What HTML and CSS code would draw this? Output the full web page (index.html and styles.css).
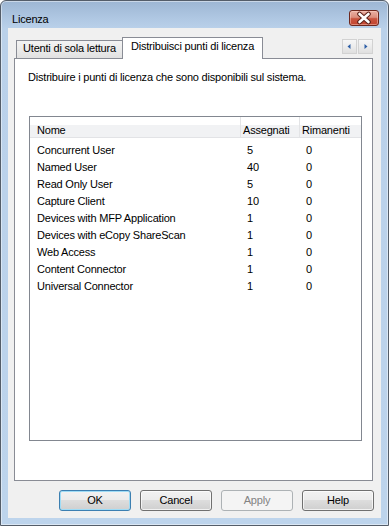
FILE: index.html
```html
<!DOCTYPE html>
<html lang="it">
<head>
<meta charset="utf-8">
<title>Licenza</title>
<link rel="stylesheet" href="styles.css">
</head>
<body>
<div class="window">
  <div class="titlebar">
    <span class="title">Licenza</span>
    <div class="close">
      <svg width="28" height="14" viewBox="0 0 28 14">
        <path d="M9.5 3 L18.5 11 M18.5 3 L9.5 11" stroke="#5b1f17" stroke-width="4.6" stroke-linecap="round"/>
        <path d="M9.5 3 L18.5 11 M18.5 3 L9.5 11" stroke="#ffffff" stroke-width="2.6" stroke-linecap="round"/>
      </svg>
    </div>
  </div>
  <div class="client">
    <div class="tabstrip">
      <div class="tab">Utenti di sola lettura</div>
      <div class="tab active">Distribuisci punti di licenza</div>
      <div class="scroller">
        <span class="sbtn"><svg width="13" height="13" viewBox="0 0 13 13"><polygon points="7.5,4 4.5,6.5 7.5,9" fill="#2d5ea6"/></svg></span>
        <span class="sbtn"><svg width="13" height="13" viewBox="0 0 13 13"><polygon points="5.5,4 8.5,6.5 5.5,9" fill="#2d5ea6"/></svg></span>
      </div>
    </div>
    <div class="panel">
      <p class="desc">Distribuire i punti di licenza che sono disponibili sul sistema.</p>
      <div class="list">
        <div class="lhead">
          <div class="c1">Nome</div>
          <div class="c2">Assegnati</div>
          <div class="c3">Rimanenti</div>
        </div>
        <div class="lbody">
          <div class="row"><div class="c1">Concurrent User</div><div class="c2">5</div><div class="c3">0</div></div>
          <div class="row"><div class="c1">Named User</div><div class="c2">40</div><div class="c3">0</div></div>
          <div class="row"><div class="c1">Read Only User</div><div class="c2">5</div><div class="c3">0</div></div>
          <div class="row"><div class="c1">Capture Client</div><div class="c2">10</div><div class="c3">0</div></div>
          <div class="row"><div class="c1">Devices with MFP Application</div><div class="c2">1</div><div class="c3">0</div></div>
          <div class="row"><div class="c1">Devices with eCopy ShareScan</div><div class="c2">1</div><div class="c3">0</div></div>
          <div class="row"><div class="c1">Web Access</div><div class="c2">1</div><div class="c3">0</div></div>
          <div class="row"><div class="c1">Content Connector</div><div class="c2">1</div><div class="c3">0</div></div>
          <div class="row"><div class="c1">Universal Connector</div><div class="c2">1</div><div class="c3">0</div></div>
        </div>
      </div>
    </div>
    <div class="buttons">
      <div class="btn default">OK</div>
      <div class="btn">Cancel</div>
      <div class="btn disabled">Apply</div>
      <div class="btn">Help</div>
    </div>
  </div>
</div>
</body>
</html>
```

FILE: styles.css
```css
* { box-sizing: border-box; }

html, body {
  margin: 0;
  padding: 0;
  background: #ffffff;
}

body {
  font-family: "Liberation Sans", Arial, sans-serif;
  font-size: 11px;
  letter-spacing: -0.2px;
  color: #000;
}

.window {
  width: 389px;
  height: 526px;
  border: 1px solid #545d69;
  border-radius: 6px 6px 0 0;
  background: linear-gradient(180deg, #9db6d3 0px, #b0c8e3 18px, #bad1ea 28px, #bdd4ec 100%);
  box-shadow: inset 0 0 0 1px rgba(255, 255, 255, 0.45);
  padding: 0 0 7px 0;
  display: flex;
  flex-direction: column;
}

.titlebar {
  height: 27px;
  display: flex;
  align-items: flex-start;
  justify-content: space-between;
  padding: 0 9px 0 11px;
}

.title {
  margin-top: 12px;
  line-height: 13px;
  color: #000;
}

.close {
  margin-top: 9px;
  width: 30px;
  height: 16px;
  border: 1px solid #6e281e;
  border-radius: 3px;
  background: linear-gradient(180deg, #eab0a3 0%, #dc8e7e 45%, #c9543f 55%, #c24530 100%);
  box-shadow: inset 0 0 0 1px rgba(255, 215, 205, 0.45);
  display: flex;
  align-items: center;
  justify-content: center;
}

.close svg { display: block; }

.client {
  margin: 0 7px;
  height: 490px;
  background: #f0f0f0;
  display: flex;
  flex-direction: column;
}

.tabstrip {
  height: 30px;
  display: flex;
  align-items: flex-end;
  padding-left: 8px;
}

.tab {
  height: 18px;
  width: 107px;
  border: 1px solid #898c95;
  border-bottom: none;
  background: linear-gradient(180deg, #f3f3f3 0%, #ebebeb 50%, #e1e1e1 100%);
  text-align: center;
  line-height: 15px;
  padding-bottom: 2px;
  white-space: nowrap;
}

.tab.active {
  height: 21px;
  width: 141px;
  margin-left: -1px;
  background: #ffffff;
  line-height: 17px;
  padding-bottom: 3px;
  position: relative;
  z-index: 1;
}

.tab.active::after {
  content: "";
  position: absolute;
  left: 0;
  right: 0;
  bottom: -1px;
  height: 1px;
  background: #ffffff;
}

.scroller {
  margin-left: auto;
  margin-right: 8px;
  align-self: flex-start;
  margin-top: 11px;
  display: flex;
  gap: 1px;
}

.sbtn {
  width: 15px;
  height: 15px;
  border: 1px solid #d2d2d2;
  background: linear-gradient(180deg, #f6f6f6 0%, #ececec 50%, #dfdfdf 100%);
  display: block;
}

.sbtn svg { display: block; }

.panel {
  margin: 0 8px 0 6px;
  height: 423px;
  border: 1px solid #898c95;
  background: #ffffff;
}

.desc {
  margin: 0;
  padding: 12px 0 0 13px;
  line-height: 13px;
}

.list {
  margin: 32px 0 0 14px;
  width: 333px;
  height: 325px;
  border: 1px solid #828790;
  background: #ffffff;
}

.lhead {
  height: 21px;
  display: flex;
  border-bottom: 1px solid #e2e3e6;
  background: linear-gradient(180deg, #ffffff 0%, #ffffff 38%, #f1f2f4 38%, #f1f2f4 100%);
}

.lhead > div {
  padding-top: 7px;
  line-height: 13px;
  white-space: nowrap;
}

.lhead .c1 { width: 211px; padding-left: 7px; border-right: 1px solid #e3e4e6; }
.lhead .c2 { width: 59px; padding-left: 2px; border-right: 1px solid #e3e4e6; }
.lhead .c3 { flex: 1; padding-left: 2px; }

.lbody { padding-top: 4px; }

.row {
  display: flex;
  height: 17px;
  line-height: 17px;
  white-space: nowrap;
}

.row .c1 { width: 211px; padding-left: 7px; }
.row .c2 { width: 59px; padding-left: 6px; }
.row .c3 { flex: 1; padding-left: 6px; }

.buttons {
  display: flex;
  justify-content: flex-end;
  gap: 9px;
  margin-top: 9px;
  padding-right: 7px;
}

.btn {
  width: 72px;
  height: 21px;
  border: 1px solid #707070;
  border-radius: 3px;
  background: linear-gradient(180deg, #f2f2f2 0%, #ebebeb 50%, #dddddd 50%, #cfcfcf 100%);
  box-shadow: inset 0 0 0 1px rgba(255, 255, 255, 0.7);
  text-align: center;
  line-height: 19px;
  color: #000;
}

.btn.default {
  border-color: #3c7fb1;
  box-shadow: inset 0 0 0 1px #9fdcf6;
}

.btn.disabled {
  border-color: #adb2b5;
  background: #f4f4f4;
  box-shadow: none;
  color: #838383;
}
```
